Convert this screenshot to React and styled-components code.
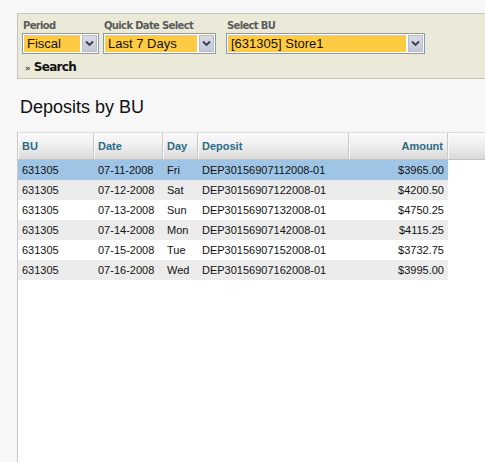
import React from "react";
import styled, { createGlobalStyle } from "styled-components";

const Global = createGlobalStyle`
  html, body { margin: 0; padding: 0; background: #f7f7f7; }
  body { font-family: "Liberation Sans", Arial, sans-serif; }
`;

const Page = styled.div`
  width: 485px;
  height: 462px;
  overflow: hidden;
  padding-top: 13px;
  box-sizing: border-box;
  display: flex;
  flex-direction: column;
`;

const FilterPanel = styled.div`
  margin-left: 17px;
  height: 66px;
  box-sizing: border-box;
  background: #ebead9;
  border: 1px solid #c6c6bf;
  border-right: none;
  padding: 5px 0 0 4px;
`;

const FieldRow = styled.div`
  display: flex;
  gap: 4px;
`;

const Field = styled.div`
  display: flex;
  flex-direction: column;
  margin-right: ${(p) => p.$gap || 0}px;
`;

const Label = styled.label`
  font-family: "DejaVu Sans", Tahoma, sans-serif;
  font-size: 10px;
  font-weight: bold;
  letter-spacing: -0.65px;
  color: #5a5a5a;
  height: 14px;
  line-height: 14px;
  padding-left: 1px;
`;

const SelectBox = styled.div`
  width: ${(p) => p.$w}px;
  height: 21px;
  box-sizing: border-box;
  border: 1px solid #7f9db9;
  background: #fff;
  padding: 1px;
  display: flex;
  gap: 2px;
`;

const SelectValue = styled.div`
  flex: 1;
  background: #ffcb43;
  font-family: "Liberation Sans", Arial, sans-serif;
  font-size: 13px;
  line-height: 17px;
  color: #111;
  padding-left: 3px;
  white-space: nowrap;
`;

const ArrowBtn = styled.div`
  width: 15px;
  box-sizing: border-box;
  border: 1px solid #b5bccf;
  background: linear-gradient(#d9dbe6, #c3c6d5);
  display: flex;
  align-items: center;
  justify-content: center;
`;

const SearchLink = styled.div`
  margin-top: 6px;
  padding-left: 3px;
  font-family: "DejaVu Sans", Tahoma, sans-serif;
  font-size: 12px;
  font-weight: bold;
  letter-spacing: -0.7px;
  color: #111;
  span {
    font-size: 9px;
    font-weight: normal;
    margin-right: 4px;
  }
`;

const Title = styled.h2`
  margin: 17px 0 0 20px;
  font-family: "Liberation Sans", Arial, sans-serif;
  font-size: 18px;
  font-weight: normal;
  line-height: 22px;
  color: #111;
`;

const TablePanel = styled.div`
  margin-top: 14px;
  margin-left: 17px;
  flex: 1;
  background: #fff;
  border-left: 1px solid #c8c8c8;
  border-top: 1px solid #dcdcdc;
`;

const Grid = styled.div`
  display: grid;
  grid-template-columns: 76px 69px 35px 151px 99px 38px;
`;

const HeadCell = styled.div`
  height: 27px;
  box-sizing: border-box;
  background: linear-gradient(#f9f9f9 0%, #eeeeee 50%, #d9d9d9 100%);
  border-right: 1px solid #c9c9c9;
  border-bottom: 1px solid #c2c2c2;
  box-shadow: inset 1px 0 0 #fafafa;
  font-size: 11px;
  font-weight: bold;
  color: #2c6a85;
  line-height: 27px;
  padding: 0 4px;
  text-align: ${(p) => (p.$right ? "right" : "left")};
  &:last-child { border-right: none; }
`;

const Cell = styled.div`
  height: 20px;
  line-height: 20px;
  font-size: 11px;
  color: #111;
  padding: 0 4px;
  text-align: ${(p) => (p.$right ? "right" : "left")};
  white-space: nowrap;
  background: ${(p) =>
    p.$blank ? "#fff" : p.$sel ? "#9fc5e6" : p.$alt ? "#ececec" : "#fff"};
`;

const Chevron = () => (
  <svg width="9" height="7" viewBox="0 0 9 7">
    <path d="M1 1.5 L4.5 5 L8 1.5" fill="none" stroke="#3a3a4a" strokeWidth="1.8" />
  </svg>
);

const Select = ({ w, value }) => (
  <SelectBox $w={w}>
    <SelectValue>{value}</SelectValue>
    <ArrowBtn>
      <Chevron />
    </ArrowBtn>
  </SelectBox>
);

const rows = [
  ["631305", "07-11-2008", "Fri", "DEP30156907112008-01", "$3965.00"],
  ["631305", "07-12-2008", "Sat", "DEP30156907122008-01", "$4200.50"],
  ["631305", "07-13-2008", "Sun", "DEP30156907132008-01", "$4750.25"],
  ["631305", "07-14-2008", "Mon", "DEP30156907142008-01", "$4115.25"],
  ["631305", "07-15-2008", "Tue", "DEP30156907152008-01", "$3732.75"],
  ["631305", "07-16-2008", "Wed", "DEP30156907162008-01", "$3995.00"],
];

export default function App() {
  return (
    <>
      <Global />
      <Page>
        <FilterPanel>
          <FieldRow>
            <Field>
              <Label>Period</Label>
              <Select w={77} value="Fiscal" />
            </Field>
            <Field $gap={6}>
              <Label>Quick Date Select</Label>
              <Select w={113} value="Last 7 Days" />
            </Field>
            <Field>
              <Label>Select BU</Label>
              <Select w={199} value="[631305] Store1" />
            </Field>
          </FieldRow>
          <SearchLink>
            <span>»</span>Search
          </SearchLink>
        </FilterPanel>
        <Title>Deposits by BU</Title>
        <TablePanel>
          <Grid>
            <HeadCell>BU</HeadCell>
            <HeadCell>Date</HeadCell>
            <HeadCell>Day</HeadCell>
            <HeadCell>Deposit</HeadCell>
            <HeadCell $right>Amount</HeadCell>
            <HeadCell />
            {rows.map((r, i) => (
              <React.Fragment key={i}>
                {r.map((c, j) => (
                  <Cell key={j} $right={j === 4} $sel={i === 0} $alt={i % 2 === 1}>
                    {c}
                  </Cell>
                ))}
                <Cell $blank />
              </React.Fragment>
            ))}
          </Grid>
        </TablePanel>
      </Page>
    </>
  );
}
